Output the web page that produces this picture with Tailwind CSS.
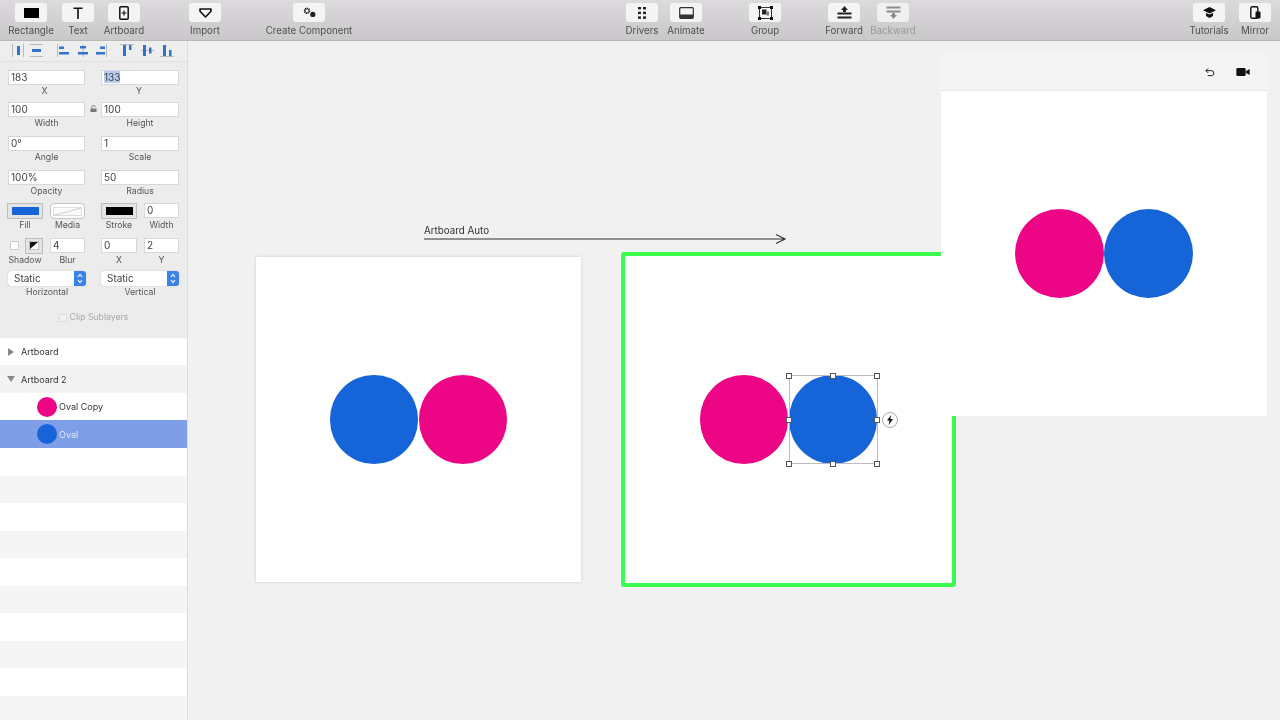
<!DOCTYPE html>
<html lang="en">
<head>
    <meta charset="UTF-8">
    <title>Artboards</title>
    <script src="https://cdn.jsdelivr.net/npm/@tailwindcss/browser@4"></script>
</head>
<body class="h-screen w-[1280px] overflow-hidden flex flex-col bg-[#f1f1f1] font-['Inter','Liberation_Sans',sans-serif] text-[#333]">

    <!-- toolbar -->
    <header class="blur-[0.4px] h-[41px] shrink-0 flex pl-[6px] bg-gradient-to-b from-[#dcdadc] to-[#c9c7c9] border-b border-[#b9b8b9] text-[9.7px] leading-[12px] text-[#4f4f4f]">
        <div class="w-[50px] flex flex-col items-center pt-[3px]">
            <div class="w-[32px] h-[19px] bg-[#f4f4f4] rounded-[3px] flex items-center justify-center"><div class="w-[15px] h-[10px] bg-black"></div></div>
            <span class="mt-[3px]">Rectangle</span>
        </div>
        <div class="w-[44px] flex flex-col items-center pt-[3px]">
            <div class="w-[32px] h-[19px] bg-[#f4f4f4] rounded-[3px] flex items-center justify-center">
                <svg width="10" height="12" viewBox="0 0 10 12"><path d="M0.5 1.2h9M5 1.2v10.8" stroke="#111" stroke-width="1.6" fill="none"/></svg>
            </div>
            <span class="mt-[3px]">Text</span>
        </div>
        <div class="w-[48px] flex flex-col items-center pt-[3px]">
            <div class="w-[32px] h-[19px] bg-[#f4f4f4] rounded-[3px] flex items-center justify-center">
                <svg width="10" height="14" viewBox="0 0 10 14"><rect x="0.8" y="0.8" width="8.4" height="12.4" rx="1" stroke="#111" stroke-width="1.5" fill="none"/><path d="M5 4.5v5M2.5 7h5" stroke="#111" stroke-width="1.2"/></svg>
            </div>
            <span class="mt-[3px]">Artboard</span>
        </div>
        <div class="w-[50px] ml-[32px] flex flex-col items-center pt-[3px]">
            <div class="w-[32px] h-[19px] bg-[#f4f4f4] rounded-[3px] flex items-center justify-center">
                <svg width="13" height="10" viewBox="0 0 13 10"><path d="M1 1h11v2.2L6.5 9 1 3.2z" stroke="#111" stroke-width="1.6" fill="none" stroke-linejoin="round"/></svg>
            </div>
            <span class="mt-[3px]">Import</span>
        </div>
        <div class="w-[100px] ml-[29px] flex flex-col items-center pt-[3px]">
            <div class="w-[32px] h-[19px] bg-[#f4f4f4] rounded-[3px] flex items-center justify-center">
                <svg width="13" height="11" viewBox="0 0 13 11"><circle cx="4" cy="3.8" r="2.3" fill="none" stroke="#222" stroke-width="1.8" stroke-dasharray="1.2 0.4"/><circle cx="9.8" cy="7.4" r="2.6" fill="#222"/></svg>
            </div>
            <span class="mt-[3px]">Create Component</span>
        </div>
        <div class="w-[44px] ml-[261px] flex flex-col items-center pt-[3px]">
            <div class="w-[32px] h-[19px] bg-[#f4f4f4] rounded-[3px] flex items-center justify-center">
                <svg width="8" height="12" viewBox="0 0 8 12" fill="#222"><rect x="0" y="0" width="3" height="2.4"/><rect x="5" y="0" width="3" height="2.4"/><rect x="0" y="4.7" width="3" height="2.4"/><rect x="5" y="4.7" width="3" height="2.4"/><rect x="0" y="9.4" width="3" height="2.4"/><rect x="5" y="9.4" width="3" height="2.4"/></svg>
            </div>
            <span class="mt-[3px]">Drivers</span>
        </div>
        <div class="w-[44px] flex flex-col items-center pt-[3px]">
            <div class="w-[32px] h-[19px] bg-[#f4f4f4] rounded-[3px] flex items-center justify-center">
                <svg width="15" height="12" viewBox="0 0 15 12"><rect x="0.7" y="0.7" width="13.6" height="10.6" rx="1" stroke="#333" stroke-width="1.2" fill="none"/><rect x="1" y="7.5" width="13" height="3.5" fill="#333"/></svg>
            </div>
            <span class="mt-[3px]">Animate</span>
        </div>
        <div class="w-[50px] ml-[32px] flex flex-col items-center pt-[3px]">
            <div class="w-[32px] h-[19px] bg-[#f4f4f4] rounded-[3px] flex items-center justify-center">
                <svg width="15" height="14" viewBox="0 0 15 14"><rect x="1.5" y="1.5" width="12" height="11" stroke="#333" stroke-width="1" fill="none"/><path d="M0 0h3v3H0zM12 0h3v3h-3zM0 11h3v3H0zM12 11h3v3h-3z" fill="#111"/><rect x="4" y="3.5" width="4.5" height="5" fill="#222"/><rect x="8.5" y="5.5" width="2.5" height="4" fill="#777"/></svg>
            </div>
            <span class="mt-[3px]">Group</span>
        </div>
        <div class="w-[50px] ml-[29px] flex flex-col items-center pt-[3px]">
            <div class="w-[32px] h-[19px] bg-[#f4f4f4] rounded-[3px] flex items-center justify-center">
                <svg width="15" height="13" viewBox="0 0 15 13" fill="#222"><path d="M7.5 0L11 4H9v2H6V4H4z"/><rect x="0.5" y="6.5" width="14" height="2"/><rect x="0.5" y="10.5" width="14" height="2"/></svg>
            </div>
            <span class="mt-[3px]">Forward</span>
        </div>
        <div class="w-[48px] flex flex-col items-center pt-[3px]">
            <div class="w-[32px] h-[19px] bg-[#f0f0f0] rounded-[3px] flex items-center justify-center">
                <svg width="15" height="13" viewBox="0 0 15 13" fill="#8c8c8c"><rect x="0.5" y="0.5" width="14" height="2"/><rect x="0.5" y="4.5" width="14" height="2"/><path d="M7.5 13L11 9H9V7H6v2H4z"/></svg>
            </div>
            <span class="mt-[3px] text-[#999]">Backward</span>
        </div>
        <div class="w-[50px] ml-[267px] flex flex-col items-center pt-[3px]">
            <div class="w-[32px] h-[19px] bg-[#f4f4f4] rounded-[3px] flex items-center justify-center">
                <svg width="13" height="11" viewBox="0 0 13 11" fill="#111"><path d="M6.5 0L13 3.3 6.5 6.5 0 3.3z"/><path d="M3 6l3.5 1.6L10 6v3l-3.5 2L3 9z"/></svg>
            </div>
            <span class="mt-[3px]">Tutorials</span>
        </div>
        <div class="w-[42px] flex flex-col items-center pt-[3px]">
            <div class="w-[32px] h-[19px] bg-[#f4f4f4] rounded-[3px] flex items-center justify-center">
                <svg width="11" height="13" viewBox="0 0 11 13"><rect x="0.8" y="0.8" width="7" height="11.4" rx="1.5" stroke="#111" stroke-width="1.4" fill="none"/><rect x="5.5" y="5.5" width="5" height="7" rx="1" fill="#111"/></svg>
            </div>
            <span class="mt-[3px]">Mirror</span>
        </div>
    </header>

    <div class="flex-1 flex min-h-0">
        <!-- inspector + layers -->
        <aside class="blur-[0.4px] w-[188px] shrink-0 bg-[#ececec] border-r border-[#dcdcdc] flex flex-col text-[8.7px] leading-[11px] text-[#555]">
            <div class="h-[21px] flex items-center pl-[12px] border-b border-[#e0e0e0] bg-[#eeeeee]">
                <svg width="165" height="14" viewBox="12 45 165 14" fill="#2f74d0">
                    <path d="M12.5 45v13M23.5 45v13M30 45.5h13M30 57.5h13M57.5 45v13M83 45v13M106.5 45v13M120 45.5h14M141 51.5h13M160 57.5h14" stroke="#b5b8bd" stroke-width="1" fill="none"/>
                    <rect x="17" y="47" width="3" height="9"/><rect x="32" y="50" width="9" height="3"/>
                    <rect x="59" y="47.5" width="5" height="2.5"/><rect x="59" y="53" width="10" height="2.5"/>
                    <rect x="80" y="47" width="6" height="2.5"/><rect x="78" y="53" width="10" height="2.5"/>
                    <rect x="100" y="47.5" width="5" height="2.5"/><rect x="96" y="53" width="9" height="2.5"/>
                    <rect x="123" y="46" width="3" height="11"/><rect x="129" y="46" width="2.5" height="5"/>
                    <rect x="143" y="46" width="3" height="11"/><rect x="149" y="48.5" width="2.5" height="6"/>
                    <rect x="163" y="46" width="3" height="11"/><rect x="169" y="51" width="2.5" height="6"/>
                </svg>
            </div>

            <div class="px-[8px] pt-[8px] grid grid-cols-[77px_78px] gap-x-[16px]">
                <div class="h-[15px] bg-white border border-[#d8d8d8] px-[2px] text-[10px] leading-[13px] text-[#444]">183</div>
                <div class="h-[15px] bg-white border border-[#d8d8d8] px-[2px] text-[10px] leading-[13px] text-[#444]"><span class="bg-[#b4cdf0]">133</span></div>
                <div class="text-center h-[17px] pt-[1px] pr-[4px]">X</div>
                <div class="text-center h-[17px] pt-[1px] pr-[2px]">Y</div>
                <div class="h-[15px] bg-white border border-[#d8d8d8] px-[2px] text-[10px] leading-[13px] text-[#444] relative">100
                    <svg class="absolute left-[81px] top-[2px]" width="7" height="7" viewBox="0 0 8 8" fill="#777"><rect x="0.5" y="4" width="7" height="4"/><path d="M2 4V2.5a2 2 0 0 1 4 0" stroke="#777" fill="none"/></svg>
                </div>
                <div class="h-[15px] bg-white border border-[#d8d8d8] px-[2px] text-[10px] leading-[13px] text-[#444]">100</div>
                <div class="text-center h-[19px] pt-[1px]">Width</div>
                <div class="text-center h-[19px] pt-[1px]">Height</div>
                <div class="h-[15px] bg-white border border-[#d8d8d8] px-[2px] text-[10px] leading-[13px] text-[#444]">0°</div>
                <div class="h-[15px] bg-white border border-[#d8d8d8] px-[2px] text-[10px] leading-[13px] text-[#444]">1</div>
                <div class="text-center h-[19px] pt-[1px]">Angle</div>
                <div class="text-center h-[19px] pt-[1px]">Scale</div>
                <div class="h-[15px] bg-white border border-[#d8d8d8] px-[2px] text-[10px] leading-[13px] text-[#444]">100%</div>
                <div class="h-[15px] bg-white border border-[#d8d8d8] px-[2px] text-[10px] leading-[13px] text-[#444]">50</div>
                <div class="text-center h-[18px] pt-[1px]">Opacity</div>
                <div class="text-center h-[18px] pt-[1px]">Radius</div>
            </div>

            <!-- fill / media / stroke / width -->
            <div class="px-[7px] flex text-center h-[27px]">
                <div class="w-[36px]">
                    <div class="h-[16px] bg-[#e4e4e4] border border-[#bdbdbd] flex items-center justify-center"><div class="w-[27px] h-[8px] bg-[#1565d8]"></div></div>
                    <div class="mt-[1px]">Fill</div>
                </div>
                <div class="w-[35px] ml-[7px]">
                    <div class="h-[16px] bg-white border border-[#c4c4c4] rounded-[4px] flex items-center justify-center">
                        <svg width="29" height="9" viewBox="0 0 29 9"><rect x="0.5" y="0.5" width="28" height="8" fill="#fafafa" stroke="#ddd"/><path d="M1 8.5L28 1" stroke="#ccc"/></svg>
                    </div>
                    <div class="mt-[1px]">Media</div>
                </div>
                <div class="w-[36px] ml-[16px]">
                    <div class="h-[16px] bg-[#e4e4e4] border border-[#bdbdbd] flex items-center justify-center"><div class="w-[27px] h-[8px] bg-black"></div></div>
                    <div class="mt-[1px]">Stroke</div>
                </div>
                <div class="w-[35px] ml-[7px]">
                    <div class="h-[15px] mb-[2px] bg-white border border-[#d8d8d8] px-[2px] text-[10px] leading-[13px] text-left text-[#444]">0</div>
                    <div>Width</div>
                </div>
            </div>

            <!-- shadow row -->
            <div class="px-[7px] mt-[8px] flex text-center h-[27px]">
                <div class="w-[36px]">
                    <div class="h-[15px] flex items-center justify-between">
                        <div class="w-[9px] h-[9px] ml-[3px] bg-white border border-[#ccc] rounded-[1px]"></div>
                        <div class="w-[18px] h-[16px] bg-[#e4e4e4] border border-[#bdbdbd] flex items-center justify-center">
                            <svg width="10" height="9" viewBox="0 0 10 9"><rect width="10" height="9" fill="#fff" stroke="#888"/><path d="M1 1h8L1 8z" fill="#111"/></svg>
                        </div>
                    </div>
                    <div class="mt-[2px]">Shadow</div>
                </div>
                <div class="w-[35px] ml-[7px]">
                    <div class="h-[15px] bg-white border border-[#d8d8d8] px-[2px] text-[10px] leading-[13px] text-left text-[#444]">4</div>
                    <div class="mt-[2px]">Blur</div>
                </div>
                <div class="w-[36px] ml-[16px]">
                    <div class="h-[15px] bg-white border border-[#d8d8d8] px-[2px] text-[10px] leading-[13px] text-left text-[#444]">0</div>
                    <div class="mt-[2px]">X</div>
                </div>
                <div class="w-[35px] ml-[7px]">
                    <div class="h-[15px] bg-white border border-[#d8d8d8] px-[2px] text-[10px] leading-[13px] text-left text-[#444]">2</div>
                    <div class="mt-[2px]">Y</div>
                </div>
            </div>

            <!-- selects -->
            <div class="px-[8px] mt-[6px] grid grid-cols-[78px_78px] gap-x-[15px] text-center">
                <div class="h-[15px] bg-white rounded-[3px] shadow-[0_0_1px_#999] flex justify-between overflow-hidden text-[10px] leading-[15px] pl-[6px] text-left text-[#444]">Static
                    <div class="w-[12px] bg-[#3b82e6] flex items-center justify-center">
                        <svg width="6" height="11" viewBox="0 0 6 11"><path d="M1 4l2-2.5L5 4M1 7l2 2.5L5 7" stroke="#fff" fill="none" stroke-width="1.1"/></svg>
                    </div>
                </div>
                <div class="h-[15px] bg-white rounded-[3px] shadow-[0_0_1px_#999] flex justify-between overflow-hidden text-[10px] leading-[15px] pl-[6px] text-left text-[#444]">Static
                    <div class="w-[12px] bg-[#3b82e6] flex items-center justify-center">
                        <svg width="6" height="11" viewBox="0 0 6 11"><path d="M1 4l2-2.5L5 4M1 7l2 2.5L5 7" stroke="#fff" fill="none" stroke-width="1.1"/></svg>
                    </div>
                </div>
                <div class="mt-[1px]">Horizontal</div>
                <div class="mt-[1px]">Vertical</div>
            </div>

            <div class="mt-[9px] h-[21px] flex items-center justify-center gap-[3px] text-[#a8a8a8]">
                <div class="w-[8px] h-[8px] bg-[#f2f2f2] border border-[#ddd] rounded-[1px]"></div>
                Clip Sublayers
            </div>

            <!-- layers -->
            <div class="mt-[10px] flex-1 flex flex-col text-[9px] text-[#333]">
                <div class="h-[27px] bg-white flex items-center pl-[8px]">
                    <svg width="6" height="8" viewBox="0 0 6 8" fill="#888"><path d="M0 0l6 4-6 4z"/></svg>
                    <span class="ml-[7px]">Artboard</span>
                </div>
                <div class="h-[28px] bg-[#f3f3f3] flex items-center pl-[7px]">
                    <svg width="8" height="6" viewBox="0 0 8 6" fill="#888"><path d="M0 0h8L4 6z"/></svg>
                    <span class="ml-[6px]">Artboard 2</span>
                </div>
                <div class="h-[27px] bg-white flex items-center pl-[37px]">
                    <div class="w-[20px] h-[20px] rounded-full bg-[#ec0585]"></div>
                    <span class="ml-[2px]">Oval Copy</span>
                </div>
                <div class="h-[28px] bg-[#7f9ee8] flex items-center pl-[37px] text-[#dfe7fa]">
                    <div class="w-[20px] h-[20px] rounded-full bg-[#1565d8]"></div>
                    <span class="ml-[2px]">Oval</span>
                </div>
                <div class="h-[28px] bg-white"></div>
                <div class="h-[27px] bg-[#f5f5f5]"></div>
                <div class="h-[28px] bg-white"></div>
                <div class="h-[27px] bg-[#f5f5f5]"></div>
                <div class="h-[28px] bg-white"></div>
                <div class="h-[27px] bg-[#f5f5f5]"></div>
                <div class="h-[28px] bg-white"></div>
                <div class="h-[27px] bg-[#f5f5f5]"></div>
                <div class="h-[28px] bg-white"></div>
                <div class="flex-1 bg-[#f5f5f5]"></div>
            </div>
        </aside>

        <!-- canvas: everything here sits at its own spot -->
        <main class="blur-[0.3px] relative flex-1 overflow-hidden">
            <span class="absolute left-[236px] top-[183px] text-[9.8px] leading-[13px] text-[#333]">Artboard Auto</span>
            <svg class="absolute left-[236px] top-[191px]" width="364" height="14" viewBox="0 0 364 14"><path d="M0 7h360M352 2.5l9 4.5-9 4.5" stroke="#333" stroke-width="1.2" fill="none"/></svg>

            <div class="absolute left-[68px] top-[216px] w-[325px] h-[325px] bg-white shadow-[0_0_3px_#ccc]">
                <div class="absolute left-[74px] top-[118px] w-[88px] h-[89px] rounded-full bg-[#1565d8]"></div>
                <div class="absolute left-[163px] top-[118px] w-[88px] h-[89px] rounded-full bg-[#ec0585]"></div>
            </div>

            <div class="absolute left-[433px] top-[211px] w-[335px] h-[335px] bg-white border-4 border-[#3cfb4f] rounded-[3px]">
                <div class="absolute left-[75px] top-[119px] w-[88px] h-[89px] rounded-full bg-[#ec0585]"></div>
                <div class="absolute left-[164px] top-[119px] w-[88px] h-[89px] rounded-full bg-[#1565d8]"></div>
                <!-- selection -->
                <div class="absolute left-[163.5px] top-[119px] w-[89px] h-[89px] border-[1.5px] border-[#bdbdbd]">
                    <div class="absolute -left-[3.5px] -top-[3.5px] w-[6px] h-[6px] bg-white border border-[#555]"></div>
                    <div class="absolute left-[40.5px] -top-[3.5px] w-[6px] h-[6px] bg-white border border-[#555]"></div>
                    <div class="absolute -right-[3.5px] -top-[3.5px] w-[6px] h-[6px] bg-white border border-[#555]"></div>
                    <div class="absolute -left-[3.5px] top-[40.5px] w-[6px] h-[6px] bg-white border border-[#555]"></div>
                    <div class="absolute -right-[3.5px] top-[40.5px] w-[6px] h-[6px] bg-white border border-[#555]"></div>
                    <div class="absolute -left-[3.5px] -bottom-[3.5px] w-[6px] h-[6px] bg-white border border-[#555]"></div>
                    <div class="absolute left-[40.5px] -bottom-[3.5px] w-[6px] h-[6px] bg-white border border-[#555]"></div>
                    <div class="absolute -right-[3.5px] -bottom-[3.5px] w-[6px] h-[6px] bg-white border border-[#555]"></div>
                    <div class="absolute left-[92px] top-[35.5px] w-[16px] h-[16px] rounded-full bg-white border border-[#aaa] flex items-center justify-center">
                        <svg width="8" height="10" viewBox="0 0 8 10" fill="#111"><path d="M5 0L1 5.5h2.4L2.6 10 7 4H4.4z"/></svg>
                    </div>
                </div>
            </div>

            <!-- preview window -->
            <div class="absolute left-[753px] top-[12px] w-[326px] h-[363px] bg-white flex flex-col">
                <div class="h-[38px] bg-[#f4f4f4] border-b border-[#e8e8e8] flex items-center justify-end pr-[17px] gap-[21px]">
                    <svg width="10" height="10" viewBox="0 0 11 10"><path d="M3.5 1L1 3.5 3.5 6M1 3.5h6a2.7 2.7 0 0 1 0 5.5H3" stroke="#222" stroke-width="1.1" fill="none"/></svg>
                    <svg width="14" height="8" viewBox="0 0 15 9" fill="#111"><rect x="0" y="0" width="10.5" height="9" rx="1.5"/><path d="M11 3.5L15 1v7l-4-2.5z"/></svg>
                </div>
                <div class="relative flex-1">
                    <div class="absolute left-[74px] top-[118px] w-[89px] h-[89px] rounded-full bg-[#ec0585]"></div>
                    <div class="absolute left-[163px] top-[118px] w-[89px] h-[89px] rounded-full bg-[#1565d8]"></div>
                </div>
            </div>
        </main>
    </div>
</body>
</html>
